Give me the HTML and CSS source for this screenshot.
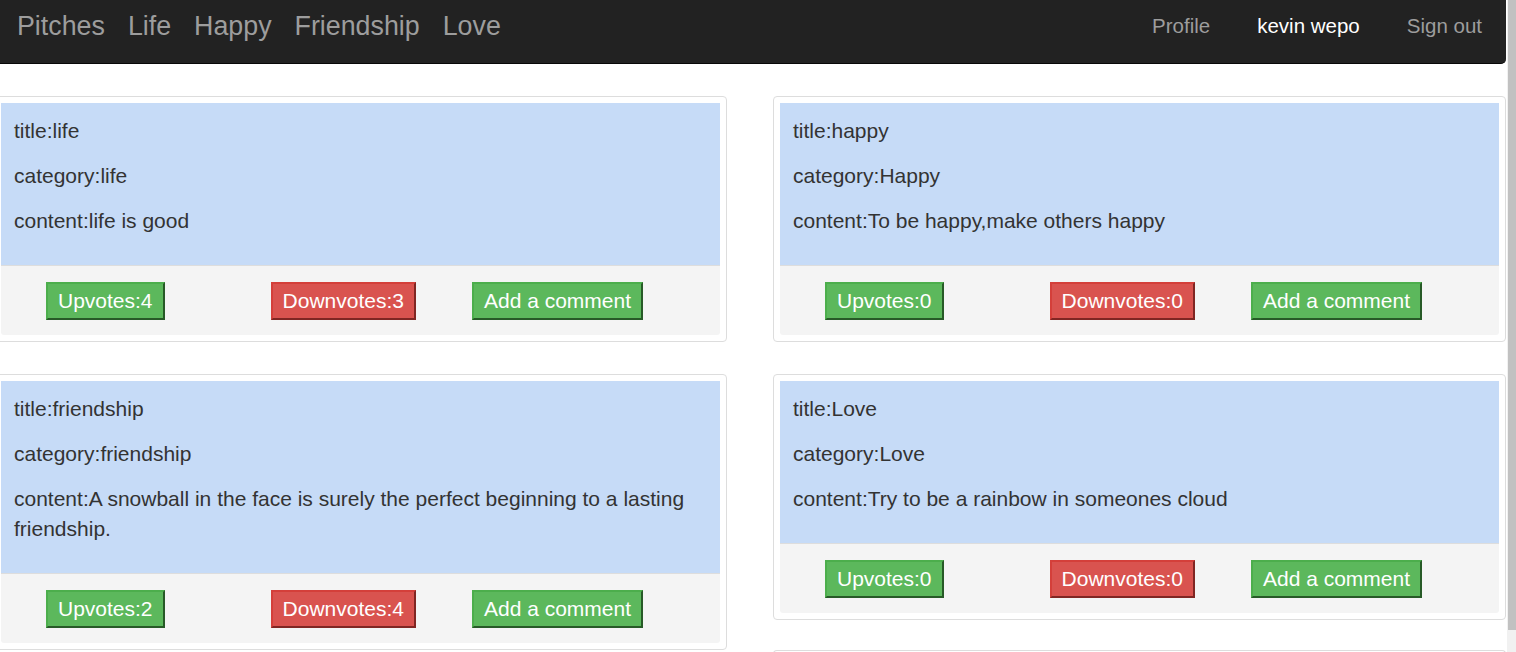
FILE: index.html
```html
<!DOCTYPE html>
<html lang="en">
<head>
<meta charset="utf-8">
<title>Pitches</title>
<link rel="stylesheet" href="styles.css">
</head>
<body>
<nav class="navbar">
  <div class="nav-left">
    <a class="nav-link" href="#">Pitches</a>
    <a class="nav-link" href="#">Life</a>
    <a class="nav-link" href="#">Happy</a>
    <a class="nav-link" href="#">Friendship</a>
    <a class="nav-link" href="#">Love</a>
  </div>
  <div class="nav-right">
    <a class="nav-item" href="#">Profile</a>
    <span class="nav-item nav-user">kevin wepo</span>
    <a class="nav-item" href="#">Sign out</a>
  </div>
</nav>

<main class="board">
  <div class="column">
    <section class="card">
      <div class="card-body">
        <p>title:life</p>
        <p>category:life</p>
        <p>content:life is good</p>
      </div>
      <div class="card-footer">
        <button class="btn btn-up">Upvotes:4</button>
        <button class="btn btn-down">Downvotes:3</button>
        <button class="btn btn-up btn-comment">Add a comment</button>
      </div>
    </section>
    <section class="card">
      <div class="card-body">
        <p>title:friendship</p>
        <p>category:friendship</p>
        <p>content:A snowball in the face is surely the perfect beginning to a lasting friendship.</p>
      </div>
      <div class="card-footer">
        <button class="btn btn-up">Upvotes:2</button>
        <button class="btn btn-down">Downvotes:4</button>
        <button class="btn btn-up btn-comment">Add a comment</button>
      </div>
    </section>
  </div>
  <div class="column">
    <section class="card">
      <div class="card-body">
        <p>title:happy</p>
        <p>category:Happy</p>
        <p>content:To be happy,make others happy</p>
      </div>
      <div class="card-footer">
        <button class="btn btn-up">Upvotes:0</button>
        <button class="btn btn-down">Downvotes:0</button>
        <button class="btn btn-up btn-comment">Add a comment</button>
      </div>
    </section>
    <section class="card">
      <div class="card-body">
        <p>title:Love</p>
        <p>category:Love</p>
        <p>content:Try to be a rainbow in someones cloud</p>
      </div>
      <div class="card-footer">
        <button class="btn btn-up">Upvotes:0</button>
        <button class="btn btn-down">Downvotes:0</button>
        <button class="btn btn-up btn-comment">Add a comment</button>
      </div>
    </section>
    <section class="card card-next"></section>
  </div>
</main>

<div class="scrollbar" aria-hidden="true"><div class="scrollbar-thumb"></div></div>
</body>
</html>
```

FILE: styles.css
```css
* {
  box-sizing: border-box;
}

body {
  margin: 0 10px 0 0;
  font-family: "Liberation Sans", Arial, sans-serif;
  color: #333;
  background: #fff;
}

.navbar {
  display: flex;
  justify-content: space-between;
  align-items: flex-start;
  height: 64px;
  padding: 11px 24px 0 17px;
  background: #222;
  border-bottom: 1px solid #080808;
  border-bottom-right-radius: 5px;
}

.nav-left {
  display: flex;
  gap: 23px;
}

.nav-link {
  font-size: 26.8px;
  line-height: 30px;
  color: #9d9d9d;
  text-decoration: none;
}

.nav-right {
  display: flex;
  gap: 47px;
}

.nav-item {
  font-size: 20.5px;
  line-height: 30px;
  color: #9d9d9d;
  text-decoration: none;
}

.nav-user {
  color: #fff;
}

.board {
  display: flex;
  gap: 46px;
  margin: 0 0 0 -6px;
  padding-top: 32px;
}

.column {
  flex: 1;
  min-width: 0;
  display: flex;
  flex-direction: column;
  gap: 32px;
}

.card {
  border: 1px solid #ddd;
  border-radius: 4px;
  padding: 6px;
  background: #fff;
}

.card-next {
  margin-top: -2px;
  height: 20px;
  border-bottom: 0;
  border-radius: 4px 4px 0 0;
}

.card-body {
  background: #c6dbf7;
  padding: 13px 13px 14px;
}

.card-body p {
  margin: 0 0 15px;
  font-size: 21px;
  line-height: 30px;
}

.card-footer {
  display: flex;
  align-items: flex-start;
  padding: 16px 0 15px 45px;
  background: #f4f4f4;
  border-top: 1px solid #ddd;
  border-radius: 0 0 3px 3px;
}

.btn {
  font-family: "Liberation Sans", Arial, sans-serif;
  font-size: 21px;
  line-height: 30px;
  color: #fff;
  padding: 2px 10px;
  border: 2px outset;
  border-radius: 0;
  cursor: pointer;
}

.btn-up {
  background: #5cb85c;
  border-color: #4cae4c;
}

.btn-down {
  background: #d9534f;
  border-color: #d43f3a;
  margin-left: 106px;
}

.btn-comment {
  margin-left: 56px;
}

.scrollbar {
  position: absolute;
  top: 0;
  right: 0;
  z-index: 10;
  width: 9px;
  height: 652px;
  padding-left: 1px;
  background: #f1f1f1;
}

.scrollbar-thumb {
  width: 8px;
  height: 630px;
  background: #c1c1c1;
}
```
